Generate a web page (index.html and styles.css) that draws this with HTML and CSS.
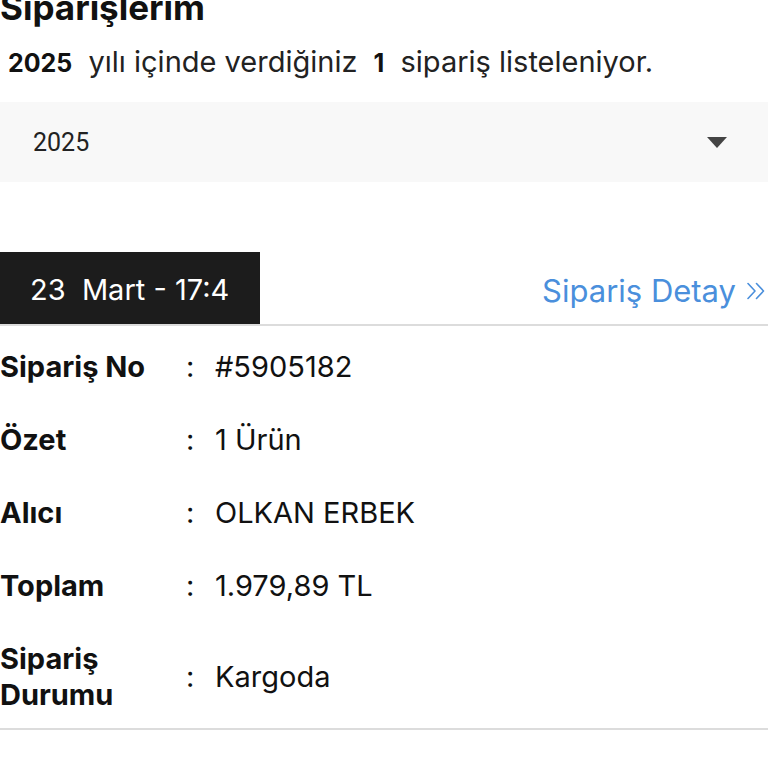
FILE: index.html
```html
<!DOCTYPE html>
<html lang="tr">
<head>
  <meta charset="UTF-8">
  <meta name="viewport" content="width=device-width, initial-scale=1.0">
  <title>Siparişlerim</title>
  <link rel="stylesheet" href="styles.css">
</head>
<body>
  <div class="page">
    <h1 class="title">Siparişlerim</h1>
    <p class="summary"><strong>2025</strong> yılı içinde verdiğiniz <strong>1</strong> sipariş listeleniyor.</p>

    <div class="year-select">
      <span>2025</span>
      <svg width="20" height="11" viewBox="0 0 20 11"><polygon points="0,0 20,0 10,11" fill="#444"/></svg>
    </div>

    <div class="order">
      <div class="order-head">
        <div class="order-date">23&nbsp; Mart - 17:4</div>
        <a class="order-link" href="#">Sipariş Detay
          <svg width="20" height="18" viewBox="0 0 20 18"><path d="M2 1.5 L9 9 L2 16.5 M10.5 1.5 L17.5 9 L10.5 16.5" fill="none" stroke="#4a8fdc" stroke-width="1.6" stroke-linecap="round" stroke-linejoin="round"/></svg>
        </a>
      </div>

      <div class="order-info">
        <div class="label">Sipariş No</div><div class="sep">:</div><div class="value">#5905182</div>
        <div class="label">Özet</div><div class="sep">:</div><div class="value">1 Ürün</div>
        <div class="label">Alıcı</div><div class="sep">:</div><div class="value">OLKAN ERBEK</div>
        <div class="label">Toplam</div><div class="sep">:</div><div class="value">1.979,89 TL</div>
        <div class="label">Sipariş<br>Durumu</div><div class="sep">:</div><div class="value">Kargoda</div>
      </div>
    </div>
  </div>
</body>
</html>
```

FILE: styles.css
```css
body {
  margin: 0;
  font-family: Inter, "Noto Sans", sans-serif;
  color: #111;
  background: #fff;
}

.page {
  width: 768px;
  overflow: hidden;
}

.title {
  margin: -13px 0 0;
  font-size: 35px;
  line-height: 40px;
  font-weight: 700;
}

.summary {
  margin: 20px 0 0;
  font-size: 29px;
  line-height: 30px;
  color: #222;

  & strong {
    padding: 0 8px;
    font-size: 25px;
    font-weight: 700;
    color: #111;
  }
}

/* select box */
.year-select {
  margin-top: 24px;
  height: 80px;
  padding: 0 41px 0 33px;
  background: #f8f8f8;
  display: flex;
  align-items: center;
  justify-content: space-between;
  font-family: Roboto, sans-serif;
  font-size: 25px;
  color: #222;
}

/* order card */
.order {
  margin-top: 70px;
}

.order-head {
  display: flex;
  justify-content: space-between;
  align-items: flex-end;
  border-bottom: 2px solid #dcdcdc;
}

.order-date {
  width: 260px;
  height: 72px;
  box-sizing: border-box;
  padding: 3px 0 0 30px;
  display: flex;
  align-items: center;
  background: #1c1c1c;
  color: #fff;
  font-size: 29px;
}

.order-link {
  display: flex;
  align-items: center;
  gap: 10px;
  padding: 0 2px 15px 0;
  color: #4a8fdc;
  text-decoration: none;
  font-size: 31px;
}

.order-info {
  display: grid;
  grid-template-columns: 186px 29px 1fr;
  row-gap: 37px;
  align-items: center;
  padding: 23px 0 15px;
  border-bottom: 2px solid #dcdcdc;
  font-size: 29px;
  line-height: 36px;

  & .label {
    font-weight: 700;
  }
}
```
